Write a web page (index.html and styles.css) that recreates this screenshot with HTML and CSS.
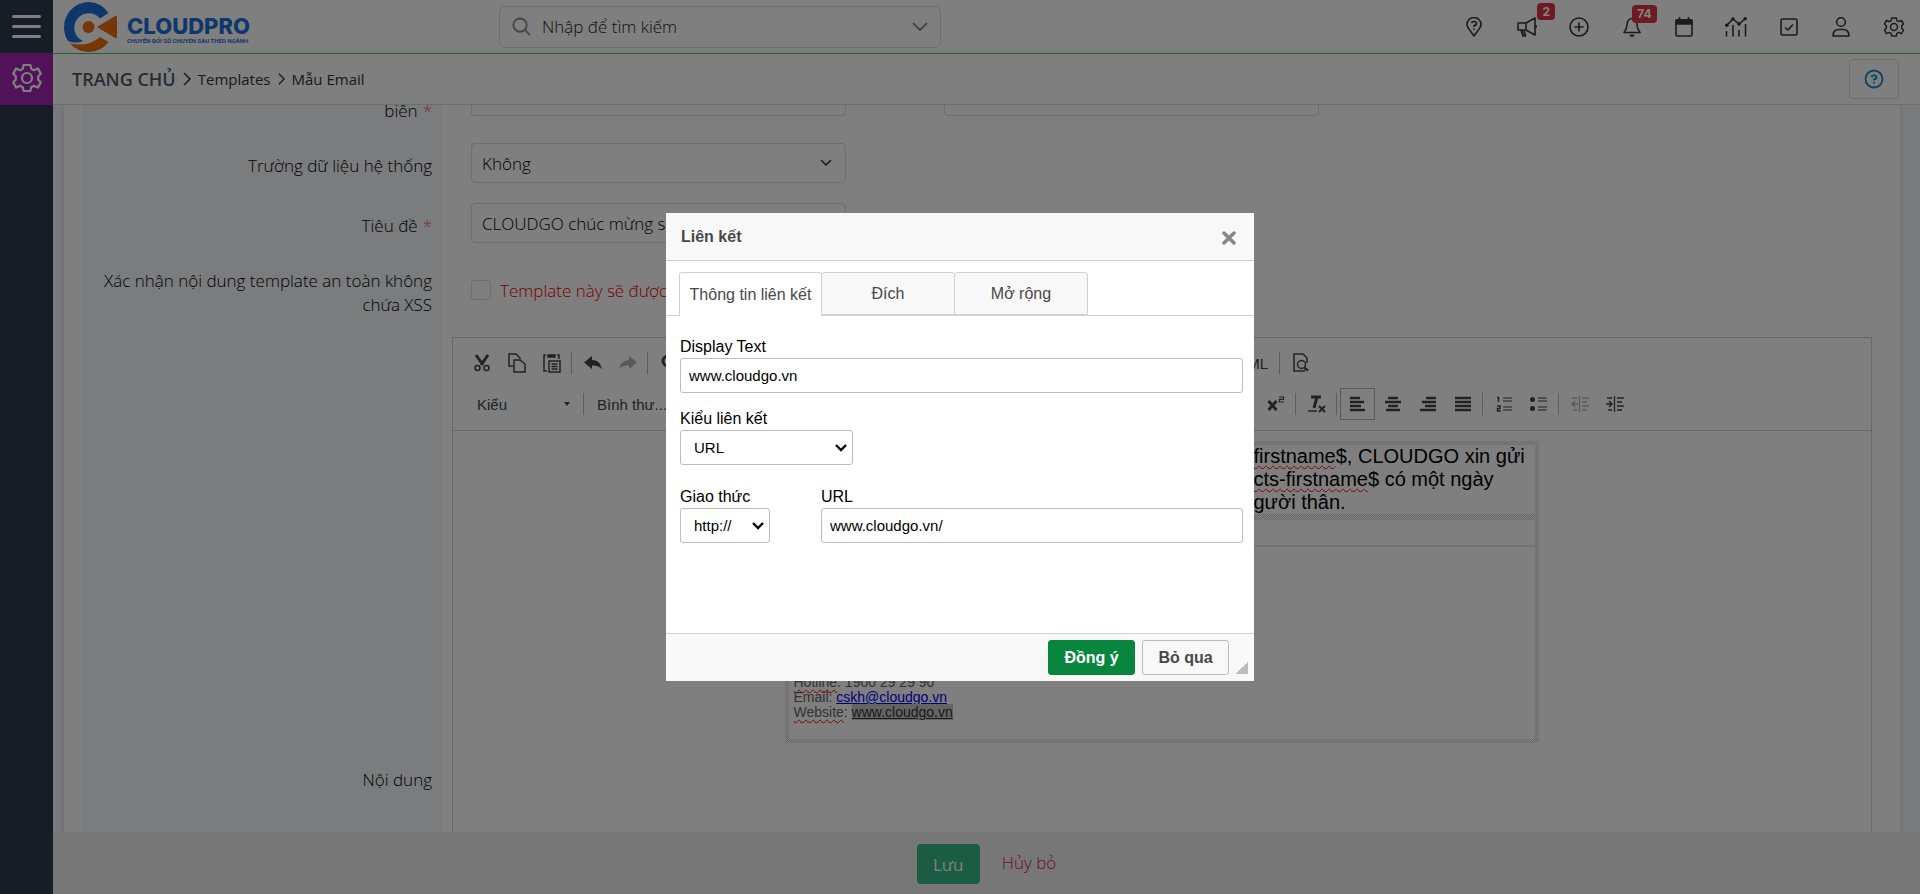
FILE: index.html
```
<!DOCTYPE html>
<html lang="vi">
<head>
<meta charset="utf-8">
<title>Mẫu Email</title>
<link rel="stylesheet" href="styles.css">
</head>
<body>
<div class="app">
  <nav class="sidebar" aria-label="Menu chính">
    <button class="menu-toggle" type="button" aria-label="Menu"><span></span><span></span><span></span></button>
    <a class="module" href="#" aria-label="Cài đặt">
      <svg width="32" height="32" viewBox="0 0 16 16"><use href="#gear"/></svg>
    </a>
  </nav>
  <div class="page">
    <header class="topbar">
      <a class="logo" href="#">
        <svg width="54" height="52" viewBox="0 0 54 52">
          <path d="M44.500 12A25 25 0 0 0 24.500 1A25 25 0 0 0 0 26Q0 34 4 40Q12 43 19 40A14.500 14.500 0 1 1 36 17.500Z" fill="#1c6fd8"/>
          <path d="M6 42.500Q24 46.500 36 36L44.500 41Q38 50.500 24.500 51 13 50.500 6 42.500Z" fill="#ee6c0c"/>
          <circle cx="24.500" cy="26" r="6" fill="#ee6c0c"/>
          <path d="M33 26 51 15Q53 14 53 16V36Q53 38 51 37Z" fill="#ee6c0c"/>
        </svg>
        <span class="logo-text"><span class="brand">CLOUDPRO</span><span class="tagline">CHUYỂN ĐỔI SỐ CHUYÊN SÂU THEO NGÀNH</span></span>
      </a>
      <div class="search">
        <svg width="19" height="19" viewBox="0 0 20 20" class="line muted"><circle cx="8.500" cy="8.500" r="7"/><path d="M13.500 13.500 19 19" /></svg>
        <input type="text" placeholder="Nhập để tìm kiếm" aria-label="Tìm kiếm">
        <svg width="16" height="9" viewBox="0 0 16 9" class="line muted"><path d="M1 1l7 7 7-7"/></svg>
      </div>
      <div class="actions">
        <button type="button" aria-label="Vị trí"><svg width="16" height="20" viewBox="0 0 16 20" class="line"><path d="M8 19C5 14 1 11 1 7.500a7 7 0 0 1 14 0C15 11 11 14 8 19Z"/><path d="M5.500 6A2.500 2 0 1 1 8 8.500V10"/><path d="M8 11.500v1.500"/></svg></button>
        <button type="button" aria-label="Thông báo"><svg width="20" height="20" viewBox="0 0 20 20" class="line"><path d="M1 6h8L18 1v17L9 13H1ZM9 6v7M4 13l2 6h2.500L7 13"/><path d="M5 14l1.500 4.500M19 8v3"/></svg><span class="badge high">2</span></button>
        <button type="button" aria-label="Tạo mới"><svg width="20" height="20" viewBox="0 0 20 20" class="line"><circle cx="10" cy="10" r="9"/><path d="M10 5.500v9M5.500 10h9"/></svg></button>
        <button type="button" aria-label="Chuông"><svg width="18" height="20" viewBox="0 0 18 20" class="line"><path d="M1 15.500Q4 12 4 7.500a5 6 0 0 1 10 0Q14 12 17 15.500ZM9 1v1"/><path d="M6.500 17.500h5a2.500 2.500 0 0 1-5 0Z" fill="#383838" stroke="none"/></svg><span class="badge">74</span></button>
        <button type="button" aria-label="Lịch"><svg width="18" height="20" viewBox="0 0 18 20" class="line"><rect x="1" y="3" width="16" height="16" rx="1.500"/><path d="M1 3h16v4H1Z" fill="#383838"/><path d="M4.500 0v3M13.500 0v3"/></svg></button>
        <button type="button" aria-label="Báo cáo"><svg width="22" height="20" viewBox="0 0 22 20" class="line"><path d="M1.500 8.500 8 2l6 5 6.500-5.500M1.500 14v5.500M8 8v11.500M14 13v6.500M20.500 7v12.500"/><g fill="#383838" stroke="none"><circle cx="1.800" cy="8.200" r="1.800"/><circle cx="8" cy="2" r="1.800"/><circle cx="14" cy="7" r="1.800"/><circle cx="20.200" cy="1.800" r="1.800"/></g></svg></button>
        <button type="button" aria-label="Công việc"><svg width="18" height="18" viewBox="0 0 18 18" class="line"><rect x="1" y="1" width="16" height="16" rx="1.500"/><path d="M5 9.500 8 12l5-5.500"/></svg></button>
        <button type="button" aria-label="Tài khoản"><svg width="18" height="20" viewBox="0 0 18 20" class="line"><circle cx="9" cy="5" r="4.300"/><path d="M1 19q0-6.500 6-6.500h4q6 0 6 6.500Z"/></svg></button>
        <button type="button" aria-label="Thiết lập"><svg width="22" height="22" viewBox="0 0 16 16"><use href="#gear"/></svg></button>
      </div>
    </header>
    <div class="crumbs">
      <nav class="trail" aria-label="Breadcrumb">
        <a class="home" href="#">TRANG CHỦ</a>
        <svg width="8" height="14" viewBox="0 0 8 14" class="line"><path d="M1 1l6 6-6 6"/></svg>
        <a href="#">Templates</a>
        <svg width="7" height="12" viewBox="0 0 8 14" class="line"><path d="M1 1l6 6-6 6"/></svg>
        <a href="#">Mẫu Email</a>
      </nav>
      <button class="help" type="button" aria-label="Trợ giúp"><svg width="20" height="20" viewBox="0 0 20 20" class="line"><circle cx="10" cy="10" r="8.500"/><path d="M7.500 8A2.500 2 0 1 1 10 10.300V11.500"/><path d="M10 13v1.500"/></svg></button>
    </div>
    <main class="content">
      <form class="panel">
        <div class="row cut"><label for="f1">biến <i>*</i></label><div class="field"><input id="f1" type="text"><input type="text" aria-label="Giá trị"></div></div>
        <div class="row"><label for="f2">Trường dữ liệu hệ thống</label><div class="field"><span class="pick"><select id="f2"><option>Không</option></select><svg width="12" height="8" viewBox="0 0 12 8" class="line"><path d="M1 1l5 5 5-5"/></svg></span></div></div>
        <div class="row"><label for="f3">Tiêu đề <i>*</i></label><div class="field"><input id="f3" type="text" value="CLOUDGO chúc mừng s"></div></div>
        <div class="row tall"><label for="f4">Xác nhận nội dung template an toàn không chứa XSS</label><div class="field check"><input id="f4" type="checkbox"><span class="warn">Template này sẽ được</span></div></div>
        <div class="row body-row"><span class="label">Nội dung</span>
          <div class="editor">
            <div class="tools">
              <div class="bar">
                <span class="group first">
                  <button type="button" aria-label="Cắt"><svg width="16" height="18" viewBox="0 0 16 18" class="ink"><path d="M2 1l7 10M14 1 7 11" stroke-width="3"/><circle cx="3.500" cy="14" r="2.500"/><circle cx="12.500" cy="14" r="2.500"/></svg></button>
                  <button type="button" aria-label="Sao chép"><svg width="18" height="20" viewBox="0 0 18 20" class="ink"><path d="M5 13H1V1h7l4 4v1M6 7h6l5 4v8H6Z"/></svg></button>
                  <button type="button" aria-label="Dán"><svg width="18" height="20" viewBox="0 0 18 20" class="ink"><path d="M3 2H1v16h3M14 2h2v4M6 8h11v11H6ZM8.500 11h6M8.500 13.500h6M8.500 16h6"/><path d="M5 2h7v2H5Z" fill="#444"/></svg></button>
                </span>
                <span class="group">
                  <button type="button" aria-label="Hoàn tác"><svg width="18" height="14" viewBox="0 0 18 14"><path d="M8 0v4q8 0 10 9-4-4-10-3.500V13L0 6.500Z" fill="#444"/></svg></button>
                  <button type="button" class="off" aria-label="Làm lại"><svg width="18" height="14" viewBox="0 0 18 14"><path d="M10 0v4Q2 4 0 13q4-4 10-3.500V13l8-6.500Z" fill="#444"/></svg></button>
                </span>
                <span class="group">
                  <button type="button" aria-label="Tìm"><svg width="16" height="18" viewBox="0 0 16 18" class="ink"><circle cx="7" cy="7" r="5" stroke-width="3"/><path d="M10 11l5 5" stroke-width="3"/></svg></button>
                </span>
                <span class="group source"><button class="text" type="button">HTML</button></span>
                <span class="group last"><button type="button" aria-label="Xem trước"><svg width="16" height="20" viewBox="0 0 16 20" class="ink"><path d="M12 18H1V1h9l4 4v5"/><circle cx="8.500" cy="11.500" r="4"/><path d="M11.500 15l3.500 2.500" stroke-width="2.500"/></svg></button></span>
              </div>
              <div class="bar formatting">
                <span class="group styles"><button class="combo" type="button">Kiểu<svg width="6" height="4" viewBox="0 0 6 4"><path d="M0 0h6L3 4Z" fill="#444"/></svg></button></span>
                <span class="group format"><button class="combo" type="button">Bình thư...</button></span>
                <span class="group"><button type="button" aria-label="Chỉ số trên"><svg width="18" height="16" viewBox="0 0 18 16" class="ink"><path d="M1.500 5l8 9M9.500 5l-8 9" stroke-width="3"/><path d="M12 1h4.500v2.300H12.500V6H17" stroke-width="1.200"/></svg></button></span>
                <span class="group"><button type="button" aria-label="Xóa định dạng"><svg width="18" height="18" viewBox="0 0 18 18" class="ink"><path d="M3 2h10M9 2 6 13" stroke-width="3"/><path d="M0 16h9" stroke-width="1.500"/><path d="M11 11l6 6M17 11l-6 6" stroke-width="2"/></svg></button></span>
                <span class="group">
                  <button type="button" class="on" aria-label="Canh trái"><svg width="16" height="16" viewBox="0 0 16 16" class="ink"><path d="M0 2h10M0 6h14M0 10h11M0 14h15" stroke-width="2.400"/></svg></button>
                  <button type="button" aria-label="Canh giữa"><svg width="16" height="16" viewBox="0 0 16 16" class="ink"><path d="M3 2h10M0 6h16M3 10h10M1 14h14" stroke-width="2.400"/></svg></button>
                  <button type="button" aria-label="Canh phải"><svg width="16" height="16" viewBox="0 0 16 16" class="ink"><path d="M6 2h10M2 6h14M5 10h11M0 14h16" stroke-width="2.400"/></svg></button>
                  <button type="button" aria-label="Canh đều"><svg width="16" height="16" viewBox="0 0 16 16" class="ink"><path d="M0 2h16M0 6h16M0 10h16M0 14h16" stroke-width="2.400"/></svg></button>
                </span>
                <span class="group">
                  <button type="button" aria-label="Danh sách số"><svg width="16" height="16" viewBox="0 0 16 16" class="ink"><path d="M1 1.500h1.500V6M1 10h3v2.500H1.500V15H5" stroke-width="1.500"/><path d="M7 2h9M7 5h9M7 11h9M7 14h9" stroke-width="1.200"/></svg></button>
                  <button type="button" aria-label="Danh sách chấm"><svg width="17" height="16" viewBox="0 0 17 16" class="ink"><circle cx="2.500" cy="3.500" r="2.500" fill="#444" stroke="none"/><circle cx="2.500" cy="12.500" r="2.500" fill="#444" stroke="none"/><path d="M8 2h9M8 5h9M8 11h9M8 14h9" stroke-width="1.200"/></svg></button>
                </span>
                <span class="group last">
                  <button type="button" class="off" aria-label="Giảm thụt lề"><svg width="18" height="16" viewBox="0 0 18 16" class="ink"><path d="M8.500 0v16M11 2h7M11 6h5M11 10h7M11 14h5M1 2h5M2 14h4" stroke-width="1.300"/><path d="M7 8H1M4 5L1 8l3 3"/></svg></button>
                  <button type="button" aria-label="Tăng thụt lề"><svg width="18" height="16" viewBox="0 0 18 16" class="ink"><path d="M8.500 0v16M11 2h7M11 6h5M11 10h7M11 14h5M1 2h5M2 14h4" stroke-width="1.300"/><path d="M0 8h6M3 5l3 3-3 3"/></svg></button>
                </span>
              </div>
            </div>
            <div class="canvas">
              <div class="mail">
                <div class="cell greeting">
                  <p><u>firstname</u>$, CLOUDGO xin gửi</p>
                  <p><u>cts-firstname</u>$ có một ngày</p>
                  <p>gười thân.</p>
                </div>
                <div class="cell strip"></div>
                <div class="cell contact">
                  <p><u>Hotline</u>: 1900 29 29 90</p>
                  <p>Email: <a href="#">cskh@cloudgo.vn</a></p>
                  <p><u>Website</u>: <a class="picked" href="#">www.cloudgo.vn</a></p>
                </div>
              </div>
            </div>
          </div>
        </div>
      </form>
    </main>
    <footer class="savebar"><button class="save" type="button">Lưu</button><a class="cancel" href="#">Hủy bỏ</a></footer>
  </div>
</div>

<div class="backdrop">
  <section class="dialog" role="dialog" aria-labelledby="dlg-title">
    <header class="dlg-head"><h2 id="dlg-title">Liên kết</h2>
      <button type="button" aria-label="Đóng"><svg width="14" height="14" viewBox="0 0 14 14"><path d="M2 2l10 10M12 2 2 12" stroke="#858585" stroke-width="3.400" stroke-linecap="round"/></svg></button></header>
    <div class="tabs" role="tablist">
      <button type="button" role="tab" class="active">Thông tin liên kết</button><button type="button" role="tab">Đích</button><button type="button" role="tab">Mở rộng</button>
    </div>
    <div class="dlg-body">
      <div class="item"><label for="d1">Display Text</label><input id="d1" type="text" value="www.cloudgo.vn"></div>
      <div class="item"><label for="d2">Kiểu liên kết</label><span class="drop wide"><select id="d2"><option>URL</option></select><svg width="12" height="8" viewBox="0 0 12 8"><path d="M1 1l5 5 5-5"/></svg></span></div>
      <div class="pair">
        <div class="item"><label for="d3">Giao thức</label><span class="drop"><select id="d3"><option>http://</option></select><svg width="12" height="8" viewBox="0 0 12 8"><path d="M1 1l5 5 5-5"/></svg></span></div>
        <div class="item grow"><label for="d4">URL</label><input id="d4" type="text" value="www.cloudgo.vn/"></div>
      </div>
    </div>
    <footer class="dlg-foot"><button class="ok" type="button">Đồng ý</button><button type="button">Bỏ qua</button><span class="grip"></span></footer>
  </section>
</div>

<svg class="defs" width="0" height="0" aria-hidden="true">
  <symbol id="gear" viewBox="0 0 16 16"><g fill="none" stroke="currentColor" stroke-width="1.100" stroke-linejoin="round"><circle cx="8" cy="8" r="2.500"/><path d="M6.300 1.500h3.400l.4 1.900 1.300.7 2-.9 1.500 2.600-1.300 1.300v1.800l1.300 1.300-1.500 2.600-2-.9-1.300.7-.4 1.900H6.300l-.4-1.900-1.300-.7-2 .9-1.500-2.600 1.300-1.300V7.100L1.100 5.800l1.500-2.600 2 .9 1.300-.7Z"/></g></symbol>
</svg>
</body>
</html>
```
FILE: styles.css
```
* { box-sizing: border-box; }
body { margin: 0; height: 100vh; overflow: hidden; font-family: "Open Sans", "Noto Sans", sans-serif; font-size: 17px; font-weight: 300; color: #000; background: #fff; }
button, input, select { font: inherit; color: inherit; margin: 0; }
button { border: 0; padding: 0; background: none; cursor: pointer; }
a { color: inherit; text-decoration: none; }
p, h2 { margin: 0; }
svg { display: block; flex: none; }
.line { fill: none; stroke: #383838; stroke-width: 1.6; stroke-linejoin: round; }
.line.muted { stroke: #8c8c8c; stroke-width: 2; }
.defs { position: absolute; }

.app { display: flex; height: 100vh; }
.sidebar { flex: none; width: 53px; background: #2d3b49; color: #fff; }
.menu-toggle { display: flex; flex-direction: column; justify-content: center; gap: 7px; width: 100%; height: 53px; padding: 0 12px; }
.menu-toggle span { height: 3px; border-radius: 2px; background: #fff; }
.module { display: flex; align-items: center; justify-content: center; height: 52px; padding-bottom: 2px; background: #a425b4; }

.page { flex: 1; min-width: 0; display: flex; flex-direction: column; }
.topbar { flex: none; display: flex; align-items: center; height: 54px; border-bottom: 1px solid #42b878; }
.logo { display: flex; align-items: center; gap: 9px; width: 435px; padding-left: 11px; color: #1c6fd8; font-family: Inter, sans-serif; }
.logo-text { display: flex; flex-direction: column; padding-top: 6px; }
.brand { font-size: 22px; line-height: 22px; font-weight: 800; }
.tagline { font-family: Roboto, sans-serif; font-size: 6px; line-height: 8px; font-weight: 700; white-space: nowrap; }
.search { display: flex; align-items: center; gap: 11px; width: 442px; height: 42px; margin-left: 11px; padding: 0 12px; border: 1px solid #ddd; border-radius: 6px; }
.search input { flex: 1; min-width: 0; border: 0; padding: 0; background: none; }
.search input::placeholder { color: #222; opacity: 1; }
.actions { display: grid; grid-template-columns: repeat(9, 1fr); width: 472px; margin-left: auto; }
.actions button { position: relative; display: flex; align-items: center; justify-content: center; height: 53px; color: #383838; }
.badge { position: absolute; left: 27px; top: 5px; padding: 0 5px; border-radius: 4px; background: #dc3545; color: #fff; font: 700 12px/18px Inter, sans-serif; }
.badge.high { left: 37px; top: 3px; line-height: 17px; }

.crumbs { flex: none; display: flex; align-items: center; justify-content: space-between; height: 51px; padding: 0 21px 0 19px; border-bottom: 1px solid #ddd; }
.trail { display: flex; align-items: center; gap: 7px; font-size: 15px; font-weight: 400; color: #333; }
.trail .home { font-size: 18px; font-weight: 600; color: #4d5b6a; }
.help { display: flex; align-items: center; justify-content: center; width: 50px; height: 40px; border: 1px solid #ddd; border-radius: 4px; }
.help .line { stroke: #1686c9; stroke-width: 1.8; }

.content { flex: 1; min-height: 0; overflow: hidden; padding: 0 20px 0 11px; background: #f3f5fa; }
.panel { padding-left: 18px; background: #fff; box-shadow: 0 0 6px rgba(0,0,0,.12); }
.row { display: grid; grid-template-columns: 360px 1fr; min-height: 60px; }
.row > label, .row > .label { display: flex; align-items: center; justify-content: flex-end; gap: 5px; padding: 5px 10px 0; background: #f7f8fc; text-align: right; line-height: 24px; }
.row i { color: #ee5566; font-style: normal; }
.field { display: flex; align-items: center; gap: 98px; padding: 0 29px; }
.field input[type=text], .pick { width: 375px; height: 40px; border: 1px solid #dcdcdc; border-radius: 4px; background: #fff; }
.field input[type=text] { padding: 0 10px; }
.row.cut { min-height: 0; height: 28px; }
.row.cut > label { align-items: flex-start; padding: 0 10px; line-height: 12px; }
.row.cut .field { align-items: flex-start; }
.row.cut input[type=text] { height: 11px; border-top: 0; border-radius: 0 0 4px 4px; }
.pick { display: flex; align-items: center; padding-right: 13px; }
.pick select { flex: 1; height: 100%; padding: 0 10px; border: 0; background: none; appearance: none; }
.row.tall { min-height: 74px; }
.field.check { gap: 9px; }
.check input { width: 20px; height: 20px; appearance: none; border: 1px solid #dcdcdc; border-radius: 3px; }
.warn { color: #f00000; white-space: nowrap; }
.row.body-row { grid-template-columns: 360px minmax(0, 1fr); height: 900px; padding-right: 28px; column-gap: 10px; }

.editor { height: 880px; margin-top: 10px; border: 1px solid #d1d1d1; font-family: "Liberation Sans", Arial, sans-serif; font-weight: 400; }
.tools { display: flex; flex-direction: column; padding: 4px 11px; height: 93px; border-bottom: 1px solid #d1d1d1; color: #444; }
.bar { display: flex; align-items: center; height: 42px; font-size: 15px; }
.bar.formatting { height: 40px; }
.group { display: flex; flex: none; align-items: center; height: 22px; padding: 0 2px 0 3px; border-right: 1px solid #bcbcbc; }
.group.last { border-right: 0; }
.group button { display: flex; align-items: center; justify-content: center; width: 35px; height: 32px; }
.group.first { padding-left: 0; }
.group.source { justify-content: flex-end; width: 91px; margin-left: 500px; padding: 0 11px 0 0; }
.group .text { justify-content: flex-end; width: 55px; }
.group .on { border: 1px solid #b5b5b5; }
.off { opacity: .4; }
.group.styles, .group.format { padding: 0; }
.group .combo { justify-content: space-between; width: 119px; padding: 0 13px; }
.group.format { width: 671px; border: 0; }
.ink { fill: none; stroke: #444; stroke-width: 1.5; }
.canvas { display: flex; justify-content: center; padding-top: 10px; }
.mail { width: 754px; margin-right: 1px; padding: 4px; background: repeating-conic-gradient(#d3d3d3 0 25%, #fff 0 50%) 0 0 / 2px 2px; }
.cell { background: #fff; }
.cell u { text-decoration: underline wavy #f00 1px; text-underline-offset: 2px; }
.greeting { height: 69px; padding-left: 465px; font-size: 20px; line-height: 23px; color: #000; white-space: nowrap; }
.strip { height: 25px; margin-top: 6px; }
.contact { height: 192px; margin-top: 2px; padding: 128px 5px 0; font-size: 14px; line-height: 15px; color: #666; }
.contact a { color: #0000ee; text-decoration: underline; }
.contact .picked { background: #c8c8c8; color: #333; }

.savebar { flex: none; display: flex; align-items: center; justify-content: center; gap: 22px; height: 62px; padding-top: 2px; background: #eee; }
.save { width: 63px; height: 40px; border-radius: 4px; background: #34b888; color: #fff; font-weight: 400; }
.cancel { padding-bottom: 4px; color: #e0203c; }

.backdrop { position: fixed; inset: 0; display: flex; align-items: center; justify-content: center; background: rgba(0,0,0,.5); font-family: "Liberation Sans", Arial, sans-serif; font-size: 16px; font-weight: 400; color: #000; }
.dialog { display: flex; flex-direction: column; width: 588px; background: #fff; }
.dlg-head { display: flex; align-items: center; justify-content: space-between; height: 48px; margin-bottom: 11px; padding: 0 18px 0 15px; background: #f8f8f8; border-bottom: 1px solid #d1d1d1; }
.dlg-head h2 { font-size: 16px; color: #484848; }
.dlg-head button { padding-top: 3px; }
.tabs { display: flex; height: 44px; padding: 0 13px; border-bottom: 1px solid #d1d1d1; }
.tabs button { width: 134px; height: 43px; margin-left: -1px; border: 1px solid #d1d1d1; border-radius: 3px 3px 0 0; background: #f8f8f8; color: #484848; }
.tabs .active { width: 143px; height: 44px; margin-left: 0; border-bottom: 0; background: #fff; }
.dlg-body { display: flex; flex-direction: column; gap: 17px; min-height: 317px; padding: 22px 11px 0 14px; }
.item { display: flex; flex-direction: column; }
.item label { padding-bottom: 2px; line-height: 18px; }
.item input, .drop { height: 35px; border: 1px solid #bcbcbc; border-radius: 3px; background: #fff; font-size: 15px; }
.item input { width: 100%; padding: 0 8px; }
.drop { display: flex; align-items: center; width: 90px; padding-right: 5px; }
.drop.wide { width: 173px; }
.drop select { flex: 1; min-width: 0; height: 100%; padding: 0 0 0 13px; border: 0; background: none; appearance: none; }
.drop path { fill: none; stroke: #000; stroke-width: 2.4; }
.pair { display: flex; gap: 51px; padding-top: 6px; }
.grow { flex: 1; }
.dlg-foot { position: relative; display: flex; align-items: center; justify-content: flex-end; gap: 7px; height: 48px; padding: 0 25px 0 0; border-top: 1px solid #d1d1d1; background: #f8f8f8; }
.dlg-foot button { width: 87px; height: 35px; border: 1px solid #bcbcbc; border-radius: 3px; font-weight: 700; color: #484848; }
.dlg-foot .ok { border-color: #09863e; background: #09863e; color: #fff; }
.grip { position: absolute; right: 6px; bottom: 7px; width: 12px; height: 12px; background: linear-gradient(135deg, transparent 50%, #bcbcbc 50%); }
```
